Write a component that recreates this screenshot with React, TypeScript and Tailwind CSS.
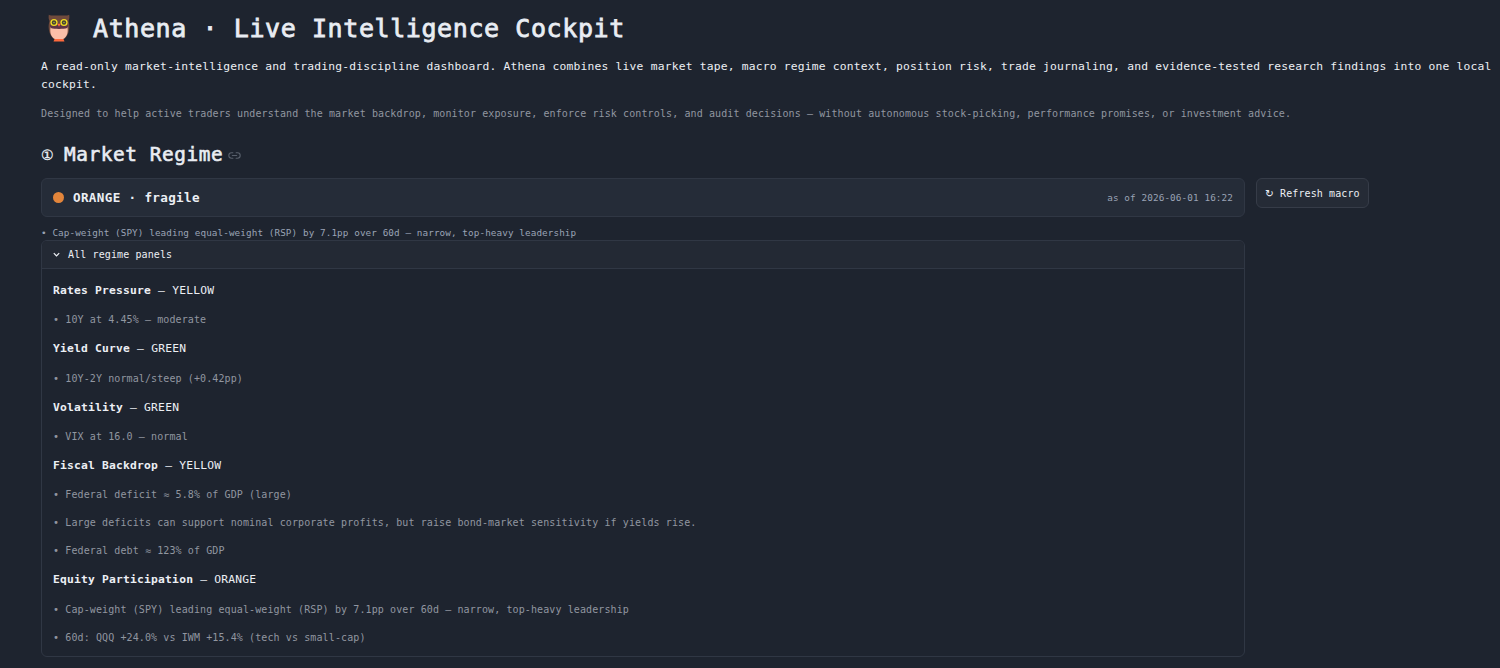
interface Panel {
  name: string;
  status: string;
  notes: string[];
}

const LEADERSHIP = "Cap-weight (SPY) leading equal-weight (RSP) by 7.1pp over 60d — narrow, top-heavy leadership";

const panels: Panel[] = [
  { name: "Rates Pressure", status: "YELLOW", notes: ["10Y at 4.45% — moderate"] },
  { name: "Yield Curve", status: "GREEN", notes: ["10Y-2Y normal/steep (+0.42pp)"] },
  { name: "Volatility", status: "GREEN", notes: ["VIX at 16.0 — normal"] },
  {
    name: "Fiscal Backdrop",
    status: "YELLOW",
    notes: [
      "Federal deficit ≈ 5.8% of GDP (large)",
      "Large deficits can support nominal corporate profits, but raise bond-market sensitivity if yields rise.",
      "Federal debt ≈ 123% of GDP",
    ],
  },
  {
    name: "Equity Participation",
    status: "ORANGE",
    notes: [LEADERSHIP, "60d: QQQ +24.0% vs IWM +15.4% (tech vs small-cap)"],
  },
];

const Owl = () => (
  <svg viewBox="0 0 24 28" className="-mt-px h-7 w-6 shrink-0">
    <path d="M1.800.8c3 1.200 5 .7 10.200.7S19.200 2 22.200.8c.4 2.500.2 4.500-.7 6.200 1.300 4 1 8 0 11.500-.9 3-2.500 5-4.500 6.500H7c-2-1.500-3.600-3.500-4.500-6.500-1-3.500-1.300-7.500 0-11.500C1.600 5.300 1.400 3.300 1.800.8z" fill="#6f4a3c" />
    <path d="M3.600 13c4 1.500 12.800 1.500 16.800 0 1 5.500-.3 10-4.300 12H7.900c-4-2-5.300-6.500-4.300-12z" fill="#fbbfa8" />
    <path d="M3 11h18l-.8 3c-4 1.200-12.400 1.200-16.400 0z" fill="#5d3245" />
    <circle cx="7" cy="8.500" r="3.600" fill="#f0dc22" />
    <circle cx="17" cy="8.500" r="3.600" fill="#f0dc22" />
    <circle cx="7" cy="8.500" r="2.200" fill="#454434" />
    <circle cx="17" cy="8.500" r="2.200" fill="#454434" />
    <circle cx="7" cy="8.500" r=".7" fill="#c9bd3a" />
    <circle cx="17" cy="8.500" r=".7" fill="#c9bd3a" />
    <path d="M10.300 9.800h3.400L12 12.800z" fill="#ff6a3d" />
    <path d="M7.500 25h9l1 2.500h-11z" fill="#ff6a3d" />
  </svg>
);

const LinkIcon = () => (
  <svg viewBox="0 0 24 24" className="h-[13px] w-[13px]" fill="none" stroke="#59606c" strokeWidth="2" strokeLinecap="round" strokeLinejoin="round">
    <path d="M15 7h2.500a5 5 0 0 1 0 10H15m-6 0H6.500a5 5 0 0 1 0-10H9M8 12h8" />
  </svg>
);

const Caption = ({ children }: { children: React.ReactNode }) => (
  <p className="text-[10px] leading-[16.35px] tracking-[0.107px] text-[#9196a0]">{children}</p>
);

export default function App() {
  return (
    <div className="h-[668px] overflow-hidden bg-[#1e242f] pl-[41px] font-['DejaVu_Sans_Mono',monospace] text-[#eceff4]">
      <header className="flex h-[57px] items-center pl-[6px]">
        <Owl />
        <h1 className="ml-[22px] -mt-px whitespace-pre text-[25px] leading-none tracking-[0.59px] [-webkit-text-stroke:0.8px_#e6eaf1]">Athena · Live Intelligence Cockpit</h1>
      </header>

      <p className="pt-[0.6px] text-[11.3px] leading-[18.7px] tracking-[0.206px]">
        A read-only market-intelligence and trading-discipline dashboard. Athena combines live market tape, macro regime context, position risk, trade journaling, and evidence-tested research findings into one local cockpit.
      </p>
      <div className="mt-[11.1px]">
        <Caption>
          Designed to help active traders understand the market backdrop, monitor exposure, enforce risk controls, and audit decisions — without autonomous stock-picking, performance promises, or investment advice.
        </Caption>
      </div>

      <h2 className="mt-[18px] flex h-[28px] items-center text-[19.4px] font-normal leading-none tracking-[0.57px] [-webkit-text-stroke:0.6px_#e6eaf1]">
        <span className="mt-[2px] w-[23px] font-['DejaVu_Sans'] text-[14px] tracking-normal [-webkit-text-stroke:0.3px_#e6eaf1]">①</span>
        Market Regime
        <span className="ml-[5px] mt-[3px]"><LinkIcon /></span>
      </h2>

      <div className="mt-[10px] flex items-start gap-[11px]">
        <div className="w-[1204px]">
          <div className="flex h-[39px] items-center rounded-md border border-[#303744] bg-[#252c38] px-[11px]">
            <span className="h-[11px] w-[11px] rounded-full bg-[#e2853b]" />
            <span className="ml-[9px] mt-[2px] text-[12.6px] font-bold tracking-[0.35px]">ORANGE · fragile</span>
            <span className="ml-auto text-[9.3px] tracking-[0.12px] text-[#9aa3b5]">as of 2026-06-01 16:22</span>
          </div>
          <p className="mt-[8px] h-[15px] text-[9.3px] leading-[16px] tracking-[0.097px] text-[#9aa3b5]">• {LEADERSHIP}</p>

          <div className="overflow-hidden rounded-md border border-[#303744]">
            <div className="flex h-[28px] items-center border-b border-[#303744] bg-[#232934] pl-[10px] text-[10px] tracking-[0.107px]">
              <svg viewBox="0 0 10 10" className="mr-[7px] h-[9px] w-[9px]" fill="none" stroke="currentColor" strokeWidth="1.400">
                <path d="M2 3.500l3 3 3-3" />
              </svg>
              All regime panels
            </div>
            <div className="flex h-[387px] flex-col gap-[11.68px] px-[11px] pt-[12.3px]">
              {panels.map((panel) => (
                <div key={panel.name} className="flex flex-col gap-[11.68px]">
                  <p className="text-[11.3px] leading-[18.7px] tracking-[0.206px]">
                    <strong>{panel.name}</strong> — {panel.status}
                  </p>
                  {panel.notes.map((note) => (
                    <Caption key={note}>• {note}</Caption>
                  ))}
                </div>
              ))}
            </div>
          </div>
        </div>

        <button className="flex h-[30px] w-[113px] items-center rounded-md border border-[#363c48] bg-[#252b36] pl-[8px] text-[10px] tracking-[0.107px]">
          <span className="w-[15px] text-left font-['DejaVu_Sans'] text-[10.5px]">↻</span>
          Refresh macro
        </button>
      </div>
    </div>
  );
}
